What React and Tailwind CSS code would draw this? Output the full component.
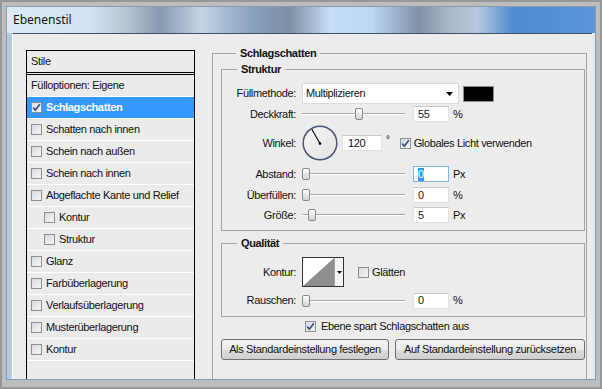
import React from "react";

function Check({ checked, className = "" }) {
  return (
    <span
      className={`inline-flex w-[11px] h-[11px] shrink-0 items-center justify-center border border-[#8e8f8f] bg-[linear-gradient(135deg,#d9d9d9,#f6f6f6)] ${className}`}
    >
      {checked && (
        <svg width="9" height="9" viewBox="0 0 9 9">
          <path d="M1.3 4.6 L3.4 7.2 L7.8 1.2" stroke="#3d4b8c" strokeWidth="1.7" fill="none" />
        </svg>
      )}
    </span>
  );
}

function Row({ children, selected, indent }) {
  return (
    <div
      className={`h-[22px] flex items-center border-b border-white ${indent ? "pl-[17px]" : "pl-[4px]"} ${
        selected ? "bg-[#3399ff] text-white font-bold" : ""
      }`}
    >
      {children}
    </div>
  );
}

function Thumb({ className = "" }) {
  return (
    <span
      className={`block w-[8px] h-[12px] rounded-[2px] border border-[#8a8a8a] bg-[linear-gradient(#ffffff,#d2d2d2)] ${className}`}
    />
  );
}

function Slider({ offset }) {
  return (
    <div className="relative w-[103px] h-[14px] flex items-center">
      <div className="w-full h-[2px] border-t border-[#a9a9a9] border-b border-b-white" />
      <div className="absolute top-[1px]" style={{ left: offset }}>
        <Thumb />
      </div>
    </div>
  );
}

function Field({ value, focused }) {
  return (
    <div
      className={`w-[36px] h-[16px] bg-white border flex items-center pl-[4px] ${
        focused ? "border-[#7eb4ea]" : "border-[#e2e2e2] border-t-[#c9c9c9]"
      }`}
    >
      {focused ? <span className="bg-[#3399ff] text-white leading-[13px]">{value}</span> : <span className="text-[#1a1a1a]">{value}</span>}
    </div>
  );
}

function Label({ children }) {
  return <div className="w-[75px] shrink-0 text-right pr-[1px]">{children}</div>;
}

export default function App() {
  const items = [
    { t: "Schatten nach innen" },
    { t: "Schein nach außen" },
    { t: "Schein nach innen" },
    { t: "Abgeflachte Kante und Relief" },
    { t: "Kontur", indent: true },
    { t: "Struktur", indent: true },
    { t: "Glanz" },
    { t: "Farbüberlagerung" },
    { t: "Verlaufsüberlagerung" },
    { t: "Musterüberlagerung" },
    { t: "Kontur" },
  ];
  return (
    <div className="w-[602px] h-[389px] overflow-hidden bg-[#bdbdbd] border-2 border-[#979797] pt-[4px] pl-[4px] pr-[4px] pb-[7px] font-['Liberation_Sans',Arial,sans-serif] text-[11px] text-[#111] tracking-[-0.35px]">
      <div className="h-full flex flex-col border border-[#8a9bb0] bg-[linear-gradient(90deg,#b3c7df,#dfe8f2_10%,#e4ebf3)] overflow-hidden">
        <div className="h-[26px] shrink-0 flex items-center pl-[6px] text-[12px] tracking-normal font-['Noto_Sans',sans-serif] text-[#111] bg-[linear-gradient(90deg,#dde9f6_0%,#d2e2f3_14%,#b9c7d6_20%,#8799ad_26%,#c3d4e6_33%,#86a0bd_42%,#7e8fa3_48%,#c6def6_55%,#bcd8f4_62%,#7f91a6_70%,#a8b7c8_75%,#b7c9dc_80%,#4f8bd3_86%,#5b94d8_100%)]">
          Ebenenstil
        </div>
        <div className="flex-1 ml-[5px] mr-[3px] border-t border-t-[#3d5068] border-l border-l-white bg-[#ececec] flex items-start overflow-hidden">
          {/* Left list */}
          <div className="ml-[13px] mt-[16px] w-[169px] h-[400px] shrink-0 border border-black bg-[#ebebeb]">
            <div className="h-[24px] flex items-center pl-[4px] border-b-[3px] border-double border-black">Stile</div>
            <Row>Fülloptionen: Eigene</Row>
            <Row selected>
              <Check checked className="mr-[4px]" />
              Schlagschatten
            </Row>
            {items.map((it, i) => (
              <Row key={i} indent={it.indent}>
                <Check className="mr-[4px]" />
                {it.t}
              </Row>
            ))}
          </div>

          {/* Right panel */}
          <fieldset className="ml-[17px] mt-[13px] w-[374px] h-[400px] shrink-0 border border-[#a3a3a3] pl-[8px] pr-[1px]">
            <legend className="ml-[15px] px-[4px] font-bold leading-[13px]">Schlagschatten</legend>
            <fieldset className="mt-[3px] w-[364px] border border-[#a3a3a3] pb-[7px]">
              <legend className="ml-[15px] px-[4px] font-bold leading-[13px]">Struktur</legend>
              {/* Füllmethode */}
              <div className="mt-[7px] flex items-center h-[21px]">
                <Label>Füllmethode:</Label>
                <div className="ml-[5px] w-[157px] h-[21px] bg-white border border-[#dadada] flex items-center pl-[3px] relative">
                  Multiplizieren
                  <svg className="absolute right-[5px] top-[8px]" width="7" height="4" viewBox="0 0 7 4">
                    <path d="M0 0 H7 L3.5 4 Z" fill="#000" />
                  </svg>
                </div>
                <div className="ml-[4px] w-[31px] h-[16px] bg-black border border-[#8c8c8c]" />
              </div>
              {/* Deckkraft */}
              <div className="mt-[2px] flex items-center h-[16px]">
                <Label>Deckkraft:</Label>
                <div className="ml-[5px]">
                  <Slider offset={53} />
                </div>
                <div className="ml-[8px]">
                  <Field value="55" />
                </div>
                <span className="ml-[4px]">%</span>
              </div>
              {/* Winkel */}
              <div className="mt-[3px] flex items-center h-[36px]">
                <Label>Winkel:</Label>
                <div className="ml-[5px] w-[36px] h-[36px]">
                  <svg width="36" height="36" viewBox="0 0 36 36">
                    <defs>
                      <linearGradient id="dg" x1="0" y1="0" x2="1" y2="1">
                        <stop offset="0" stopColor="#f7f7f7" />
                        <stop offset="1" stopColor="#e2e2e2" />
                      </linearGradient>
                    </defs>
                    <circle cx="18" cy="18" r="16.8" fill="url(#dg)" stroke="#4b5677" strokeWidth="1.5" />
                    <line x1="18" y1="18.5" x2="9.8" y2="4.3" stroke="#000" strokeWidth="1.1" />
                    <rect x="16.8" y="17.3" width="2.4" height="2.4" fill="#000" />
                  </svg>
                </div>
                <div className="ml-[4px] w-[40px] h-[16px] bg-white border border-[#e2e2e2] border-t-[#c9c9c9] flex items-center pl-[5px]">
                  120
                </div>
                <span className="ml-[4px] self-start mt-[7px] text-[10px]">°</span>
                <Check checked className="ml-[10px]" />
                <span className="ml-[3px]">Globales Licht verwenden</span>
              </div>
              {/* Abstand */}
              <div className="mt-[5px] flex items-center h-[16px]">
                <Label>Abstand:</Label>
                <div className="ml-[5px]">
                  <Slider offset={0} />
                </div>
                <div className="ml-[8px]">
                  <Field value="0" focused />
                </div>
                <span className="ml-[4px]">Px</span>
              </div>
              {/* Überfüllen */}
              <div className="mt-[5px] flex items-center h-[16px]">
                <Label>Überfüllen:</Label>
                <div className="ml-[5px]">
                  <Slider offset={0} />
                </div>
                <div className="ml-[8px]">
                  <Field value="0" />
                </div>
                <span className="ml-[4px]">%</span>
              </div>
              {/* Größe */}
              <div className="mt-[4px] flex items-center h-[16px]">
                <Label>Größe:</Label>
                <div className="ml-[5px]">
                  <Slider offset={6} />
                </div>
                <div className="ml-[8px]">
                  <Field value="5" />
                </div>
                <span className="ml-[4px]">Px</span>
              </div>
            </fieldset>

            <fieldset className="mt-[6px] w-[364px] border border-[#a3a3a3] pb-[8px]">
              <legend className="ml-[15px] px-[4px] font-bold leading-[13px]">Qualität</legend>
              <div className="mt-[7px] flex items-center h-[30px]">
                <Label>Kontur:</Label>
                <div className="ml-[5px] w-[42px] h-[30px] border border-[#333] flex bg-white">
                  <svg width="31" height="28" viewBox="0 0 31 28">
                    <rect width="31" height="28" fill="#fff" />
                    <path d="M0 28 L31 0 L31 28 Z" fill="#8e8e8e" />
                  </svg>
                  <div className="flex-1 border-l border-[#a0a0a0] bg-[#f4f4f4] flex items-center justify-center">
                    <svg width="5" height="3" viewBox="0 0 5 3">
                      <path d="M0 0 H5 L2.5 3 Z" fill="#000" />
                    </svg>
                  </div>
                </div>
                <Check className="ml-[14px]" />
                <span className="ml-[3px]">Glätten</span>
              </div>
              <div className="mt-[6px] flex items-center h-[15px]">
                <Label>Rauschen:</Label>
                <div className="ml-[5px]">
                  <Slider offset={0} />
                </div>
                <div className="ml-[8px]">
                  <Field value="0" />
                </div>
                <span className="ml-[4px]">%</span>
              </div>
            </fieldset>

            <div className="mt-[4px] h-[11px] flex items-center pl-[84px]">
              <Check checked />
              <span className="ml-[5px]">Ebene spart Schlagschatten aus</span>
            </div>
            <div className="mt-[7px] flex gap-[6px]">
              <button className="w-[168px] h-[21px] rounded-[3px] border border-[#707070] bg-[linear-gradient(#f2f2f2_0%,#ebebeb_50%,#dddddd_51%,#cfcfcf_100%)] text-[11px] tracking-[-0.35px] font-['Liberation_Sans',Arial,sans-serif]">
                Als Standardeinstellung festlegen
              </button>
              <button className="w-[190px] h-[21px] rounded-[3px] border border-[#707070] bg-[linear-gradient(#f2f2f2_0%,#ebebeb_50%,#dddddd_51%,#cfcfcf_100%)] text-[11px] tracking-[-0.35px] font-['Liberation_Sans',Arial,sans-serif]">
                Auf Standardeinstellung zurücksetzen
              </button>
            </div>
          </fieldset>
        </div>
      </div>
    </div>
  );
}
